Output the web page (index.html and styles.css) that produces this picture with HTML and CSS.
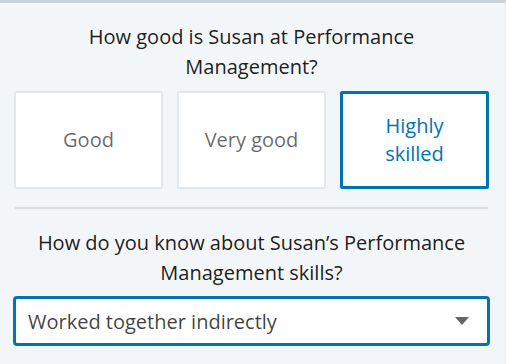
FILE: index.html
```html
<!DOCTYPE html>
<html lang="en">
    <head>
        <title>Skill endorsement</title>
        <meta charset="UTF-8">
        <link rel="stylesheet" href="styles.css">
    </head>
    <body>
        <div class="panel">
            <div class="question">How good is Susan at Performance Management?</div>
            <div class="options">
                <div class="option">Good</div>
                <div class="option">Very good</div>
                <div class="option selected">Highly<br>skilled</div>
            </div>
            <div class="divider"></div>
            <div class="question second">How do you know about Susan’s Performance Management skills?</div>
            <div class="select">
                <span class="select-text">Worked together indirectly</span>
                <span class="select-caret"></span>
            </div>
        </div>
    </body>
</html>
```

FILE: styles.css
```css
body {
    margin: 0;
    background-color: #F3F6F8;
    font-family: 'Open Sans', 'Noto Sans', sans-serif;
    color: rgba(0, 0, 0, 0.9);
}

.panel {
    box-sizing: border-box;
    height: 364px;
    border-top: 3px solid #C9D2D8;
    border-right: 1px solid #E6EBEE;
    padding: 19px 16px 0 14px;
}

.question {
    font-size: 20px;
    line-height: 30px;
    text-align: center;
    padding: 0 40px;
}
.question.second {
    padding: 0 10px;
}

.options {
    display: grid;
    grid-template-columns: repeat(3, 1fr);
    gap: 14px;
    margin-top: 9px;
}

.option {
    display: flex;
    align-items: center;
    justify-content: center;
    height: 94px;
    background-color: #FFFFFF;
    border: 2px solid #E1E8EC;
    border-radius: 2px;
    text-align: center;
    font-size: 20px;
    line-height: 28px;
    color: rgba(0, 0, 0, 0.6);
}
.option.selected {
    height: 92px;
    border: 3px solid #0073B1;
    color: #0073B1;
}

.divider {
    height: 2px;
    background-color: #D8DEE2;
    margin: 18px 1px 19px 1px;
}

.select {
    display: flex;
    align-items: center;
    justify-content: space-between;
    height: 44px;
    margin: 8px -1px 0 -1px;
    padding: 0 18px 0 12px;
    background-color: #FFFFFF;
    border: 3px solid #0073B1;
    border-radius: 4px;
    font-size: 20px;
    color: rgba(0, 0, 0, 0.75);
}

.select-caret {
    width: 0;
    height: 0;
    border-left: 7px solid transparent;
    border-right: 7px solid transparent;
    border-top: 8px solid #666666;
}
```
